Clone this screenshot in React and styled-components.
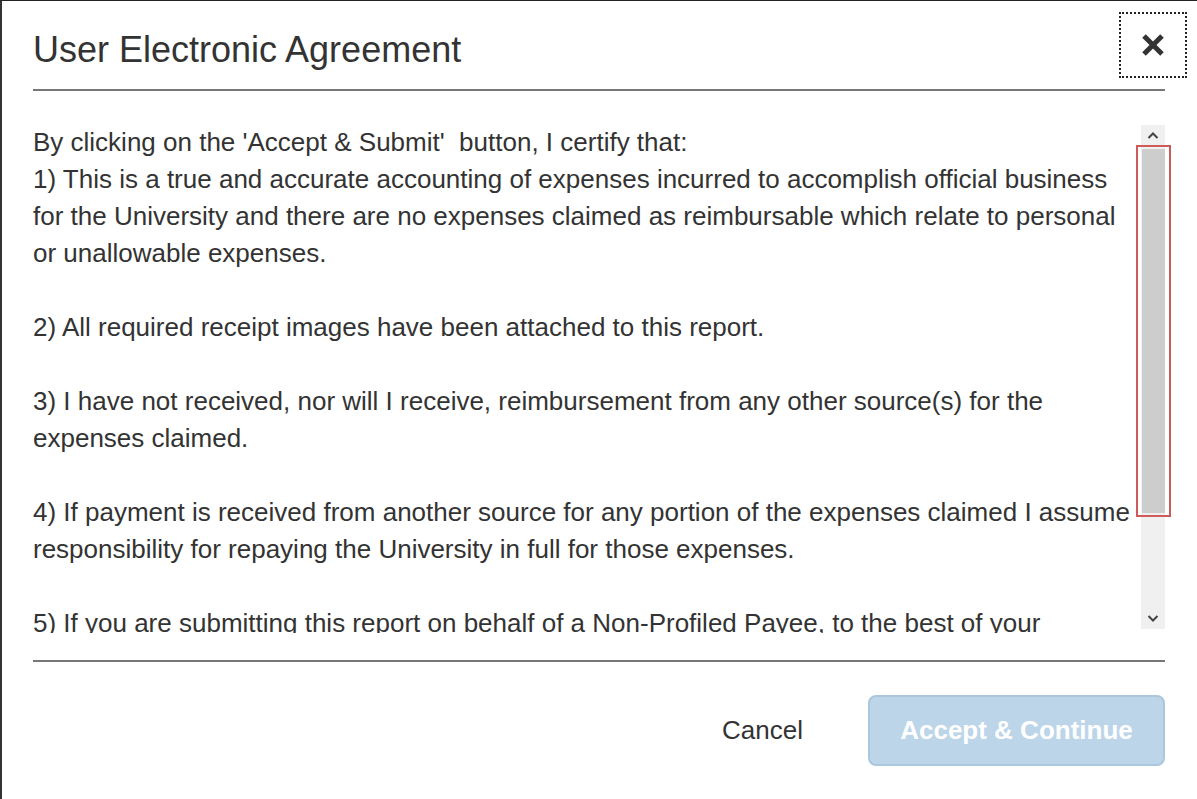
import React from 'react';
import styled, { createGlobalStyle } from 'styled-components';

const GlobalStyle = createGlobalStyle`
  html, body {
    margin: 0;
    padding: 0;
    background: #ffffff;
  }
  body {
    font-family: "Liberation Sans", Arial, sans-serif;
    color: #333333;
  }
`;

/* dialog frame */

const Dialog = styled.div`
  box-sizing: border-box;
  width: 1197px;
  height: 799px;
  border-top: 1px solid #222;
  border-left: 2px solid #333;
  padding: 0 32px 0 31px;
  display: flex;
  flex-direction: column;
  background: #fff;
`;

/* header */

const Header = styled.header`
  display: flex;
  align-items: center;
  justify-content: space-between;
  height: 88px;
  border-bottom: 2px solid #777;
`;

const Title = styled.h2`
  margin: 0;
  font-size: 36px;
  font-weight: 400;
  color: #333;
  padding-top: 10px;
`;

const CloseBtn = styled.button`
  box-sizing: border-box;
  width: 68px;
  height: 66px;
  margin-right: -22px;
  margin-top: -1px;
  border: 2px dotted #222;
  background: transparent;
  display: flex;
  align-items: center;
  justify-content: center;
  padding: 0;
  cursor: pointer;
`;

/* body */

const BodyRow = styled.div`
  display: flex;
  margin-top: 33px;
  height: 509px;
`;

const Terms = styled.div`
  flex: 1;
  overflow: hidden;
  font-size: 26px;
  line-height: 37px;
  color: #333;
  padding-right: 4px;
`;

const Para = styled.p`
  margin: 0 0 37px;
`;

const ScrollTrack = styled.div`
  width: 24px;
  flex: none;
  margin-top: 1px;
  margin-bottom: 4px;
  background: #f0f0f0;
  display: flex;
  flex-direction: column;
  align-items: center;
`;

const ArrowBtn = styled.div`
  height: 20px;
  width: 100%;
  display: flex;
  align-items: center;
  justify-content: center;
`;

const Thumb = styled.div`
  box-sizing: border-box;
  width: 35px;
  height: 372px;
  border: 2px solid #cf5a5a;
  padding: 2px 4px;
  display: flex;
  flex: none;
  &::after {
    content: '';
    flex: 1;
    background: #cdcdcd;
  }
`;

const TrackFill = styled.div`
  flex: 1;
`;

/* footer */

const Footer = styled.footer`
  margin-top: 27px;
  border-top: 2px solid #777;
  display: flex;
  justify-content: flex-end;
  align-items: center;
  padding-top: 33px;
  gap: 65px;
`;

const CancelBtn = styled.button`
  background: none;
  border: none;
  font-family: inherit;
  font-size: 26px;
  color: #333;
  padding: 0;
  cursor: pointer;
`;

const AcceptBtn = styled.button`
  box-sizing: border-box;
  width: 297px;
  height: 71px;
  border-radius: 8px;
  border: 2px solid #aac7de;
  background: #bcd5e9;
  color: #ffffff;
  font-family: inherit;
  font-weight: 700;
  font-size: 26px;
  cursor: default;
`;

const Chevron = ({ up }) => (
  <svg width="12" height="8" viewBox="0 0 12 8">
    <path
      d={up ? 'M1.5 7 L6 2.5 L10.5 7' : 'M1.5 1 L6 5.5 L10.5 1'}
      fill="none"
      stroke="#444"
      strokeWidth="2"
    />
  </svg>
);

const CloseIcon = () => (
  <svg width="24" height="24" viewBox="0 0 24 24">
    <path d="M3 3 L21 21 M21 3 L3 21" stroke="#333" strokeWidth="5" strokeLinecap="butt" />
  </svg>
);

export default function App() {
  return (
    <>
      <GlobalStyle />
      <Dialog>
        <Header>
          <Title>User Electronic Agreement</Title>
          <CloseBtn aria-label="Close">
            <CloseIcon />
          </CloseBtn>
        </Header>

        <BodyRow>
          <Terms>
            <Para>
              By clicking on the 'Accept &amp; Submit'&nbsp; button, I certify that:
              <br />
              1) This is a true and accurate accounting of expenses incurred to accomplish official business
              for the University and there are no expenses claimed as reimbursable which relate to personal
              or unallowable expenses.
            </Para>
            <Para>2) All required receipt images have been attached to this report.</Para>
            <Para>
              3) I have not received, nor will I receive, reimbursement from any other source(s) for the
              expenses claimed.
            </Para>
            <Para>
              4) If payment is received from another source for any portion of the expenses claimed I assume
              responsibility for repaying the University in full for those expenses.
            </Para>
            <Para>
              5) If you are submitting this report on behalf of a Non-Profiled Payee, to the best of your
              knowledge, the expenses are accurate and were incurred in the conduct of University business.
            </Para>
          </Terms>
          <ScrollTrack>
            <ArrowBtn>
              <Chevron up />
            </ArrowBtn>
            <Thumb />
            <TrackFill />
            <ArrowBtn>
              <Chevron />
            </ArrowBtn>
          </ScrollTrack>
        </BodyRow>

        <Footer>
          <CancelBtn>Cancel</CancelBtn>
          <AcceptBtn disabled>Accept &amp; Continue</AcceptBtn>
        </Footer>
      </Dialog>
    </>
  );
}
